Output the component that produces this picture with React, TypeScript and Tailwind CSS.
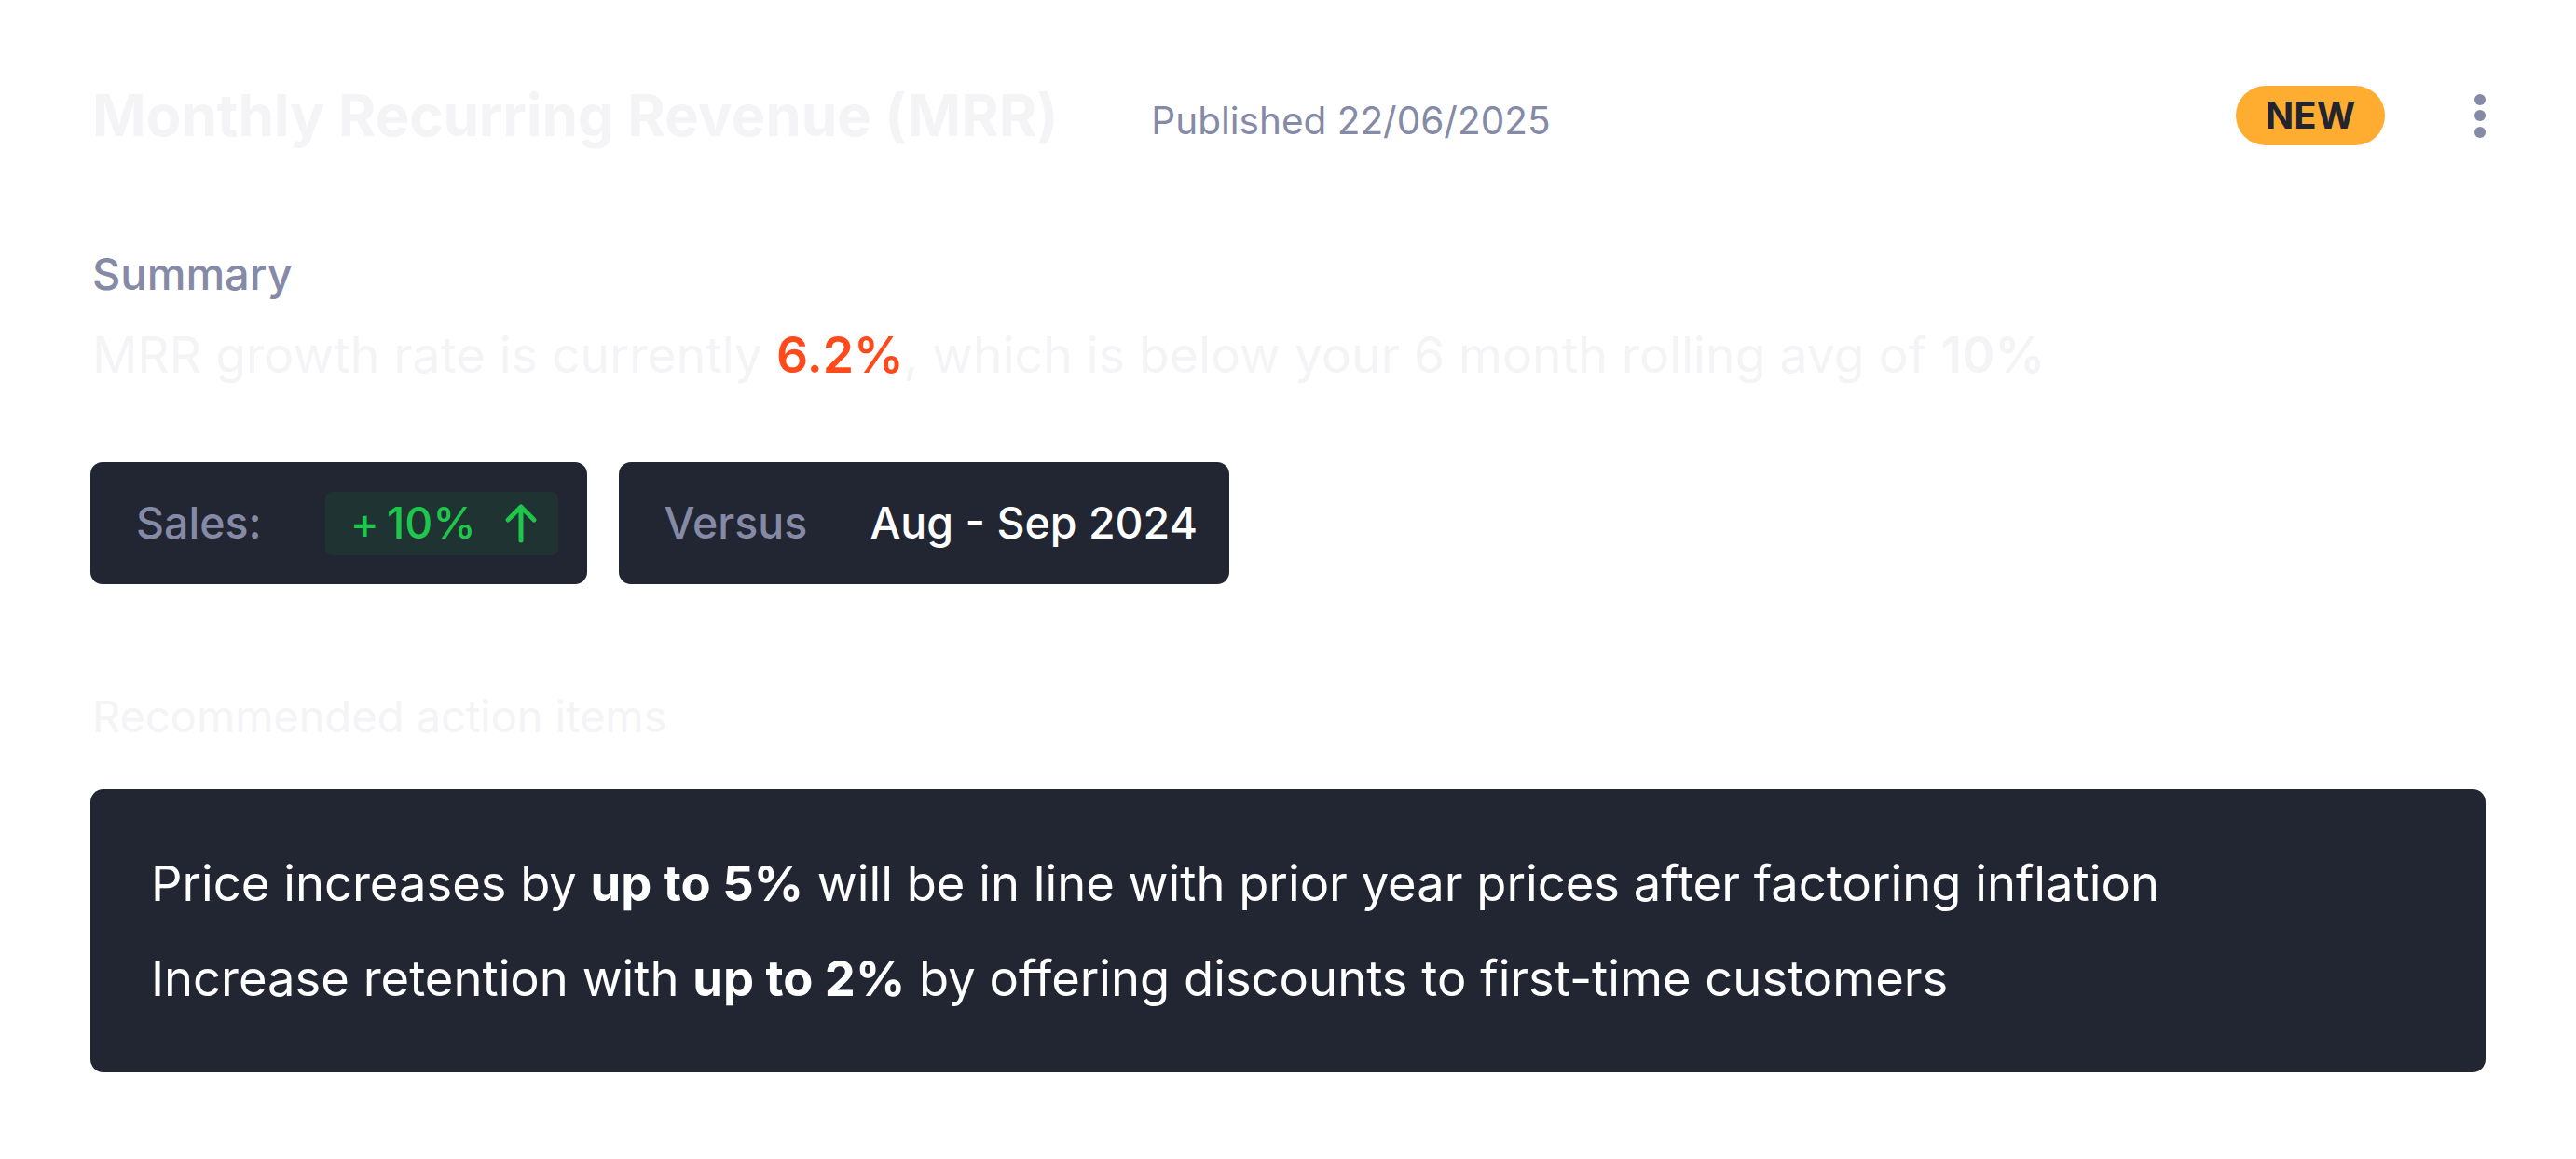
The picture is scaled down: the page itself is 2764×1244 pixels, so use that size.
import React from "react";

const font = { fontFamily: "Inter, 'Noto Sans', sans-serif" };

function ArrowUp() {
  return (
    <svg width="36" height="44" viewBox="0 0 36 44" fill="none" className="text-[#1fc64c]">
      <path d="M18 40V5M4 18L18 4l14 14" stroke="currentColor" strokeWidth="5" strokeLinecap="round" strokeLinejoin="round" />
    </svg>
  );
}

function Kebab() {
  return (
    <div className="flex flex-col items-center gap-[5.5px]">
      <span className="block h-[12px] w-[12px] rounded-full bg-[#858aa6]" />
      <span className="block h-[12px] w-[12px] rounded-full bg-[#858aa6]" />
      <span className="block h-[12px] w-[12px] rounded-full bg-[#858aa6]" />
    </div>
  );
}

export default function App() {
  return (
    <div style={font} className="min-h-[1244px] w-full bg-white px-[97px] pt-[92px] antialiased">
      <header className="flex h-[64px] items-center">
        <h1 className="ml-[2px] text-[62px] font-bold leading-none tracking-[-0.2px] text-[#f4f3f6]">
          Monthly Recurring Revenue (MRR)
        </h1>
        <span className="ml-[100px] mt-[12px] text-[40.5px] leading-none text-[#858aa6]">Published 22/06/2025</span>
        <div className="ml-auto flex items-center gap-[96px]">
          <span className="flex h-[64px] w-[160px] items-center justify-center rounded-full bg-[#ffad31] text-[40px] font-bold text-[#22252f]">
            NEW
          </span>
          <Kebab />
        </div>
      </header>

      <section className="mt-[110px]">
        <h2 className="ml-[2px] text-[47px] font-medium leading-[56px] text-[#858aa6]">Summary</h2>
        <p className="ml-[2px] mt-[27px] text-[53.5px] leading-[64px] text-[#f4f3f6]">
          MRR growth rate is currently <span className="font-semibold text-[#ff4a1c]">6.2%</span>, which is below your 6
          month rolling avg of <span className="font-semibold">10%</span>
        </p>

        <div className="mt-[83px] flex gap-[34px]">
          <div className="flex h-[131px] items-center gap-[68px] rounded-[13px] bg-[#222532] pl-[49px] pr-[31px]">
            <span className="text-[46.5px] font-medium text-[#858aa6]">Sales:</span>
            <span className="flex h-[68px] items-center gap-[30px] rounded-[7px] bg-[#1f3333] pl-[27px] pr-[22px] text-[46.5px] font-medium text-[#1fc64c]">
              <span>
                + <span className="ml-[-4px]">10%</span>
              </span>
              <ArrowUp />
            </span>
          </div>
          <div className="flex h-[131px] items-center gap-[67px] rounded-[13px] bg-[#222532] pl-[49px] pr-[34px]">
            <span className="text-[46.5px] font-medium text-[#858aa6]">Versus</span>
            <span className="text-[46.5px] font-medium text-white">Aug - Sep 2024</span>
          </div>
        </div>
      </section>

      <section className="mt-[114px]">
        <h2 className="ml-[2px] text-[47px] leading-[56px] text-[#f4f3f6]">Recommended action items</h2>
        <div className="mt-[50px] flex flex-col gap-[40px] rounded-[14px] bg-[#222532] px-[65px] py-[70px] text-[52.5px] leading-[62px] text-white">
          <p>
            Price increases by <strong className="font-bold">up to 5%</strong> will be in line with prior year prices
            after factoring inflation
          </p>
          <p>
            Increase retention with <strong className="font-bold">up to 2%</strong> by offering discounts to first-time
            customers
          </p>
        </div>
      </section>
    </div>
  );
}
